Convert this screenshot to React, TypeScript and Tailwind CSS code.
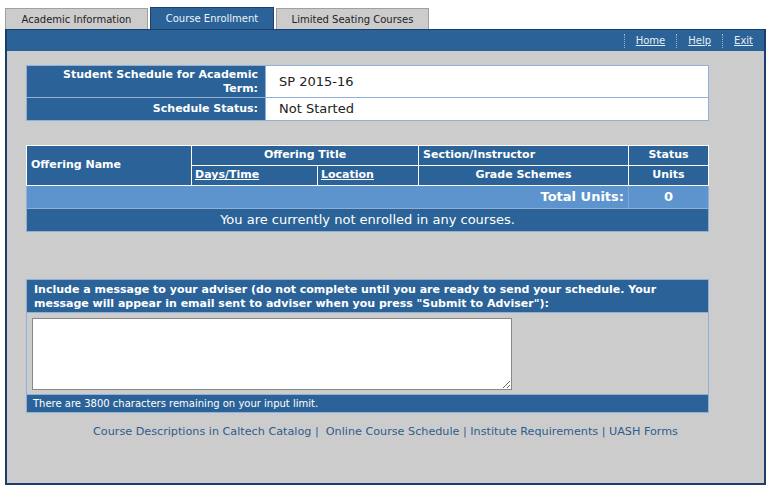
import React from 'react';

const blue = 'bg-[#2b6398]';

export default function App() {
  return (
    <div className="w-[772px] h-[491px] bg-white font-['DejaVu_Sans',Verdana,sans-serif] text-[#222]">
      <div className="pl-[5px] pt-[7px] w-[767px]">
        {/* tabs */}
        <div className="flex items-end gap-[2px] h-[22px]">
          <div className="h-[21px] w-[143px] border border-b-0 border-[#a0a0a0] bg-[#cccccc] text-[10px] text-[#222] flex items-center justify-center">
            Academic Information
          </div>
          <div className="h-[22px] w-[124px] border border-b-0 border-[#1c3f6c] bg-[#2b6398] text-[10px] text-[#eef3f8] flex items-center justify-center">
            Course Enrollment
          </div>
          <div className="h-[21px] w-[153px] border border-b-0 border-[#a0a0a0] bg-[#cccccc] text-[10px] text-[#222] flex items-center justify-center">
            Limited Seating Courses
          </div>
        </div>

        {/* frame */}
        <div className="w-[761px] h-[456px] border-2 border-t-0 border-[#1b3e6b] bg-[#cccccc] flex flex-col">
          <div className={`${blue} h-[22px] border-t border-[#1b3e6b] flex items-center justify-end pr-[11px] text-[10px] text-[#e6edf5]`}>
            <span className="h-[14px] border-l border-dotted border-[#9bb6d4] mr-[11px]" />
            <span className="underline">Home</span>
            <span className="h-[14px] border-l border-dotted border-[#9bb6d4] mx-[11px]" />
            <span className="underline">Help</span>
            <span className="h-[14px] border-l border-dotted border-[#9bb6d4] mx-[11px]" />
            <span className="underline">Exit</span>
          </div>

          <div className="pl-[19px] pt-[14px] flex flex-col">
            {/* term table */}
            <table className="w-[683px] border-collapse border border-[#8fb0d8]">
              <tbody>
                <tr className="h-[32px]">
                  <td className={`${blue} w-[239px] border border-[#8fb0d8] text-right text-[11px] font-bold text-white pr-[7px] leading-[14px]`}>
                    Student Schedule for Academic Term:
                  </td>
                  <td className="bg-white border border-[#8fb0d8] pl-[13px] text-[13px]">SP 2015-16</td>
                </tr>
                <tr className="h-[23px]">
                  <td className={`${blue} border border-[#8fb0d8] text-right text-[11px] font-bold text-white pr-[7px]`}>
                    Schedule Status:
                  </td>
                  <td className="bg-white border border-[#8fb0d8] pl-[13px] text-[13px]">Not Started</td>
                </tr>
              </tbody>
            </table>

            {/* courses table */}
            <table className="w-[683px] mt-[24px] border-collapse text-white">
              <tbody>
                <tr className={`${blue} h-[20px] text-[11px] font-bold`}>
                  <td rowSpan={2} className="w-[165px] border border-white pl-[4px]">Offering Name</td>
                  <td colSpan={2} className="border border-white text-center">Offering Title</td>
                  <td className="w-[210px] border border-white pl-[4px]">Section/Instructor</td>
                  <td className="border border-white text-center">Status</td>
                </tr>
                <tr className={`${blue} h-[20px] text-[11px] font-bold`}>
                  <td className="w-[126px] border border-white pl-[3px] underline">Days/Time</td>
                  <td className="w-[101px] border border-white pl-[3px] underline">Location</td>
                  <td className="border border-white text-center">Grade Schemes</td>
                  <td className="border border-white text-center">Units</td>
                </tr>
                <tr className="bg-[#5e94cd] h-[23px] text-[13px] font-bold">
                  <td colSpan={4} className="border border-[#8fb0d8] border-r-[#7fa5d0] text-right pr-[4px]">Total Units:</td>
                  <td className="border border-[#8fb0d8] text-center">0</td>
                </tr>
                <tr className={`${blue} h-[23px] text-[13px]`}>
                  <td colSpan={5} className="border border-[#8fb0d8] text-center">
                    You are currently not enrolled in any courses.
                  </td>
                </tr>
              </tbody>
            </table>

            {/* adviser message */}
            <div className="w-[683px] mt-[47px] border border-[#8fb0d8] flex flex-col">
              <div className={`${blue} h-[32px] px-[7px] pt-[3px] text-[11px] font-bold text-white leading-[14px]`}>
                Include a message to your adviser (do not complete until you are ready to send your schedule. Your message will appear in email sent to adviser when you press "Submit to Adviser"):
              </div>
              <div className="border-t border-[#8fb0d8] h-[82px] pl-[5px] pt-[5px]">
                <textarea className="block w-[480px] h-[72px] bg-white border border-[#888] resize" />
              </div>
              <div className={`${blue} h-[18px] border-t border-[#8fb0d8] pl-[6px] text-[10px] text-white leading-[18px]`}>
                There are 3800 characters remaining on your input limit.
              </div>
            </div>
          </div>

          {/* links */}
          <div className="w-full mt-[11px] text-center text-[11.2px] text-[#2c5c8e]">
            Course Descriptions in Caltech Catalog |&nbsp; Online Course Schedule | Institute Requirements | UASH Forms
          </div>
        </div>
      </div>
    </div>
  );
}
